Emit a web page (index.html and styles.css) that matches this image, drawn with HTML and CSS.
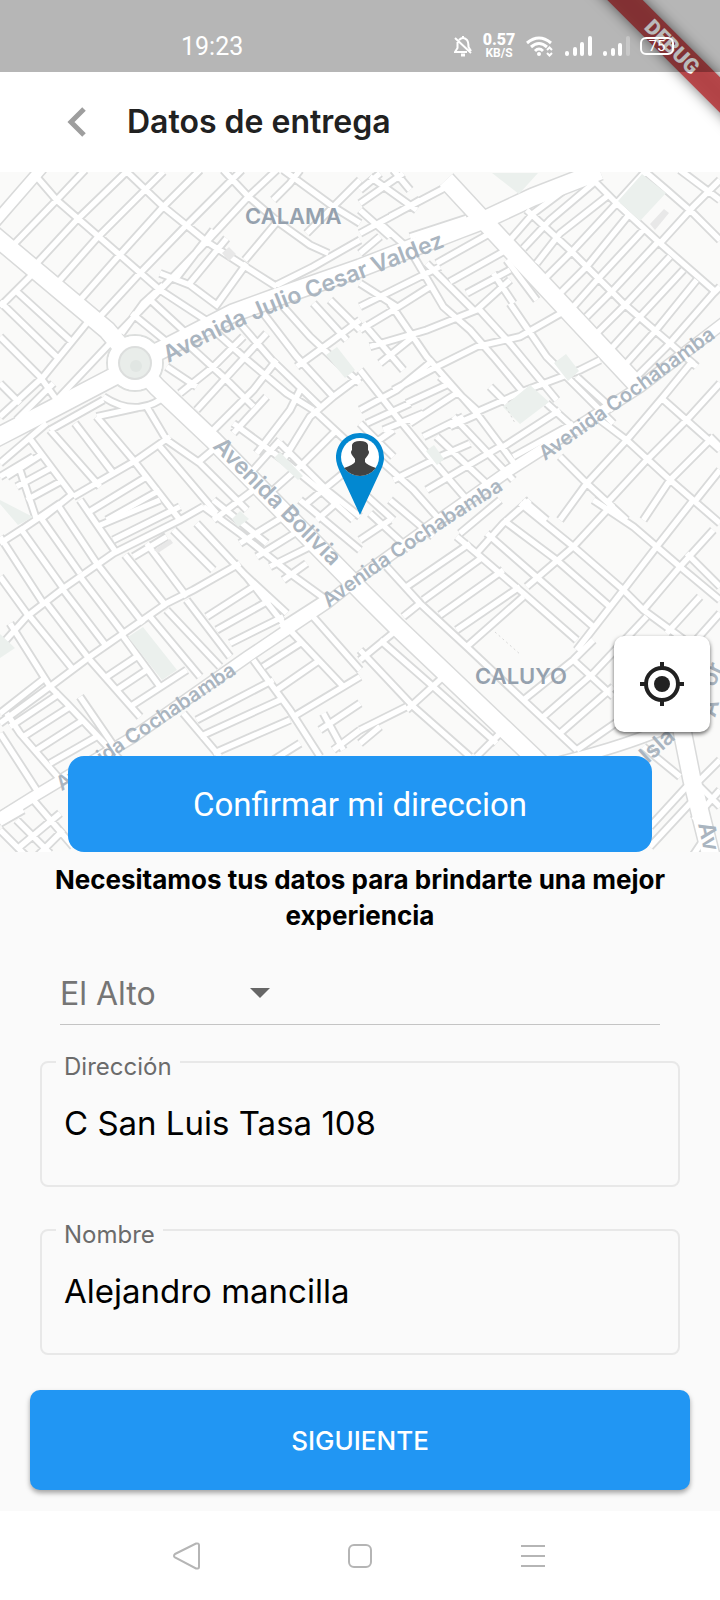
FILE: index.html
```html
<!DOCTYPE html>
<html lang="es">
<head>
<meta charset="utf-8">
<meta name="viewport" content="width=device-width, initial-scale=1">
<title>Datos de entrega</title>
<link rel="stylesheet" href="styles.css">
</head>
<body>
<div class="app">
  <svg class="debug-banner" viewBox="0 0 150 150" aria-label="Debug">
    <defs><filter id="soft" x="-30%" y="-30%" width="160%" height="160%"><feGaussianBlur stdDeviation="7"/></filter></defs>
    <path d="M31 -24L174 119" stroke="#000" stroke-opacity=".55" stroke-width="25" filter="url(#soft)"/>
    <path d="M31 -24L174 119" stroke="#b64043" stroke-opacity=".94" stroke-width="25"/>
    <text class="debug-text" transform="translate(102 47) rotate(45)" text-anchor="middle" y="7">DEBUG</text>
  </svg>
  <header class="status">
    <time class="clock">19:23</time>
    <div class="status-icons">
      <svg width="18" height="22" viewBox="0 0 18 22" fill="none" stroke="#fff" stroke-width="2"><path d="M5 5Q9 1 13 5Q14.500 7 14.500 12L17 16M3.500 7V13L1 17H13M9 1V3M1 3L17 18"/><path d="M7 20H11" stroke-width="3"/></svg>
      <div class="speed"><b>0.57</b><span>KB/S</span></div>
      <svg width="28" height="22" viewBox="0 0 28 22" fill="none" stroke="#fff" stroke-width="3"><path d="M1 8Q13-2 25 8M5 12Q13 5 21 12M9 16Q13 12 17 16"/><circle cx="13" cy="19" r="2" fill="#fff" stroke="none"/><path d="M21 15L23.500 12.500L26 15M21 18L23.500 20.500L26 18" stroke-width="2"/></svg>
      <svg width="28" height="20" viewBox="0 0 28 20" stroke="#fff" stroke-width="4" stroke-linecap="round"><path d="M3 18V17M11 18V13M18 18V8M26 18V2"/></svg>
      <svg width="28" height="20" viewBox="0 0 28 20" stroke="#fff" stroke-width="4" stroke-linecap="round"><path d="M3 18V17M11 18V14M18 18V9"/><path d="M26 18V2" stroke-opacity=".25"/></svg>
      <div class="battery">75</div>
    </div>
  </header>

  <div class="appbar">
    <button class="back" aria-label="Volver"><svg width="20" height="30" viewBox="0 0 20 30" fill="none" stroke="#9e9e9e" stroke-width="5"><path d="M17 2L4 15L17 28"/></svg></button>
    <h1>Datos de entrega</h1>
  </div>

  <section class="map">
    <svg class="map-canvas" viewBox="0 172 720 680" role="img" aria-label="Mapa">
      <defs>
        <g id="minor" fill="none">
          <path transform="translate(0 170) scale(.33333)" d="M40 225L170 90L255 0M110 280L230 150L380 5M175 335L290 205L490 5M240 390L350 265L490 110L600 0M295 445L410 320L560 165L725 0M350 495L480 360L620 215L745 80L830 0M105 15L170 90L480 360L640 465M380 5L490 110L620 215L720 280L830 350M670 0L745 80L840 160L930 225L985 250M850 0L1000 110L1080 160M820 90L870 40L900 0M920 190L1000 110L1080 30M735 270L840 145M525 330L640 180M565 345L680 205M480 310L570 345L650 405L740 280M395 430L530 540M440 380L570 500M365 490L430 400L490 345M830 345L940 290L1080 210
          M560 520L680 630L760 710M640 480L730 560L860 670L940 720M720 460L815 570L960 710M790 430L890 560L1000 680M850 410L930 500L1080 640M940 400L1040 510M990 390L1080 480M540 670L640 590L730 500M590 720L690 610L800 490M640 780L760 660L830 570M700 790L800 680M770 850L870 720L900 660M850 870L930 740L1000 680L1080 620M890 590L1000 510L1080 450M700 760L850 870L960 960L1060 1050M840 820L980 960L1080 1040M940 720L1080 850M760 900L840 810M820 960L910 880L1010 780M920 1000L1030 910M500 590L590 650
          M0 410L100 310M45 360L220 520M0 395L180 570M0 500L120 620L170 690M0 740L130 620L260 460M0 640L60 700M50 750L160 640M170 690L330 520M0 880L140 760M85 800L220 980M150 780L300 950M225 760L340 910M290 740L400 870L540 1050M220 980L410 870L510 800M440 710L500 810L600 880L740 1020M590 880L650 830M290 740L450 705M20 920L130 850M50 950L160 890M80 990L190 930M60 900L110 1050M260 1030L440 920M320 1050L480 960M120 1050L220 970M480 830L650 1030M0 920L100 860M640 1050L760 960M150 780L310 690M310 680Q400 740 480 690"/>
          <path transform="translate(360 170) scale(.33333)" d="M0 100L130 10M30 20L170 120M100 0L150 60M0 120L90 200M90 140L280 40M0 60L60 10M0 190L110 130L180 90M150 200L320 145M0 250L60 200M60 160L150 240
          M500 120L630 240L790 400L930 520L1010 590M690 20L770 100L900 220L1060 360M450 210L520 130L640 40M490 235L570 150L700 40M530 280L600 190L740 80M560 320L640 240L770 100M600 370L680 290L810 130M640 410L720 320L850 180M680 440L760 360L890 220M710 490L800 400L930 260M750 540L840 440L970 300M790 590L880 490L1010 330M830 620L920 530L1060 370M770 100L860 0M900 220L1000 110L1080 30M850 0L920 60L1000 130L1080 210M960 0L1080 90M1060 370L1080 350
          M230 280L390 190M270 335L430 245M320 370L450 300M90 400L200 560L350 730L470 890M150 240L250 410L330 480L400 560L500 680M200 280L340 420M350 410L450 520L590 690M450 400L560 560L760 760M400 310L460 400M440 270L530 390M0 410L160 330L240 290M0 480L100 420L210 350M30 530L200 480L350 420L450 330M10 460L130 600M60 580L160 500M100 660L230 590L350 530L480 500L620 420M0 720L110 660L220 570M140 700L270 640M20 760L150 700M150 760L290 670M340 730L500 660L660 600L720 570M270 770L360 730M190 800L310 740M430 830L600 720M460 860L640 760M100 930L240 860L330 820M200 960L420 830M0 600L110 740L200 850L330 1000M0 760L100 860M60 870L160 960L240 1050M280 740L460 930M230 800L400 960M560 700L660 790M650 620L760 720M390 650L440 700M240 620L350 720M70 780L190 730M0 850L100 780M0 960L100 1050M0 340L110 410
          M600 860L680 940L800 1050M720 750L800 810L930 930L1080 1060M900 680L990 760L1080 840M600 1050L680 940L800 810L910 680L1000 570M740 1000L860 870L980 750L1080 640M850 1050L930 930L1060 800M490 990L560 1050M1000 1000L1080 900M1050 800L1080 830"/>
          <path transform="translate(0 500) scale(.33333)" d="M0 130L70 85L180 10M0 440L80 350L190 265L340 160L540 60L610 20M0 670L150 560L270 470L500 310L580 270L720 190M0 230L80 340M0 110L130 310M65 90L190 265M120 50L240 220M170 10L290 190M240 0L350 160M30 370L150 560L200 610L370 790M90 350L220 510M140 310L270 480M190 270L320 440M240 230L370 400M290 190L430 370M375 165L500 320M440 130L560 290M520 90L640 210M590 70L740 230L850 370M270 480L420 650M370 410L480 560M450 350L600 530M560 300L690 470M320 530L410 470M350 570L440 510M390 620L560 510M0 640L140 530M30 680L180 580M70 710L210 620M110 750L250 660M150 790L290 710M20 640L60 700L190 850M0 700L110 870M240 590L350 750M290 80L480 0M340 120L540 20M400 170L500 110
          M500 330L660 500M620 350L760 260M650 390L810 300M690 430L850 350M840 380L980 290M610 20L720 100L870 220L980 300M640 0L800 130M720 130L850 50M770 170L900 90M810 200L930 140M850 240L920 190M730 220L860 340M900 0L1080 150M950 60L1020 0M760 480L870 630L960 770M860 380L1030 560M930 340L1080 510M790 500L900 430M830 570L960 480M880 650L1080 530M590 660L820 540M600 710L840 600M640 760L870 660M550 640L660 770M960 690L1080 610M970 640L1030 750M1000 750L1080 690M820 780L900 730M50 960L150 1060M100 900L220 1040M0 990L90 1080M0 970L70 930M60 1040L180 940M100 1080L190 990"/>
          <path transform="translate(360 500) scale(.33333)" d="M80 200L180 310L320 440L490 600L650 750M290 110L350 160L490 280L650 420M380 100L540 240L700 380M430 60L590 180L750 320M480 10L640 140L790 270L850 330L1000 440M700 0L820 80L960 200L1080 300M140 260L330 130M190 300L370 170M240 345L430 210M290 390L480 260M320 440L490 290M130 350L180 310M300 100L420 0M350 160L430 70L510 0M500 260L640 140L760 10M650 450L790 270L890 140L1000 0M850 330L960 200L1060 90M920 400L1020 290M490 600L640 480L700 420M550 650L700 520L860 350M600 700L760 560M650 750L780 660M640 480L760 590M980 160L1080 260M1000 430L1080 340M0 450L160 620L330 770M60 420L220 560L410 730M0 480L110 390M140 630L250 530M0 690L140 620M0 730L60 680M350 770L430 690M0 120L90 60M30 40L150 150M90 0L220 110M870 1040L1000 900M870 980L980 860M1000 860L1080 780M1020 860L1080 920M1000 960L1080 870M970 1110L1030 1020M850 740L960 830"/>
        </g>
        <g id="major" fill="none">
          <path d="M-10 232L107 330L135 363L157 387L213 440L367 597L397 627L540 763L630 860"/>
          <path d="M-8 440L50 410L113 377L135 363L167 347L233 313L277 297L360 268L460 229L484 220L533 197L600 171"/>
          <path d="M446 180L484 221L638 386"/>
          <path d="M680 720L692 780L712 860"/>
        </g>
        <g id="avenue" fill="none">
          <path d="M730 318L640 387L510 470L443 517L360 577L327 603L247 657L133 737L33 797L-10 824"/>
          <path d="M-5 222L42 168M560 762Q630 745 680 722"/>
        </g>
        <path id="valdez" d="M168 363Q240 324 300 302T480 233"/>
        <path id="bolivia" d="M212 447L360 595"/>
        <path id="coch1" d="M329 608Q400 553 540 467"/>
        <path id="coch2" d="M545 461Q640 394 750 312"/>
        <path id="coch3" d="M62 791Q150 733 270 651"/>
      </defs>
      <path class="land" d="M0 172H720V852H0Z"/>
      <use href="#minor" class="case minor-case"/>
      <use href="#avenue" class="case avenue-case"/>
      <use href="#major" class="case major-case"/>
      <circle cx="135" cy="363" r="28" fill="#fff" stroke="#dcdedd" stroke-width="2"/>
      <use href="#minor" class="road minor-road"/>
      <use href="#avenue" class="road avenue-road"/>
      <use href="#major" class="road major-road"/>
      <circle cx="135" cy="363" r="27" fill="#fff"/>
      <circle cx="135" cy="363" r="16" fill="#e9edea" stroke="#dcdedd" stroke-width="2"/>
      <circle cx="136" cy="366" r="6" fill="#e1e6e3"/>
      <path class="park" d="M492 173H538L519 194ZM618 201L642 174L666 193L640 221ZM503 407L530 385L549 402L520 424ZM554 363L566 354L579 371L568 381ZM326 355L337 347L355 370L345 378ZM128 637L143 627L177 670L162 680ZM0 500L33 517L18 525L0 504ZM0 634L15 648L0 658ZM274 458L280 452L303 476L298 480ZM426 451L434 445L444 459L437 465ZM232 519L240 511L249 519L238 527Z"/>
      <path class="building" d="M222 253L229 247L236 254L229 261ZM154 550L170 539L173 543L158 553ZM650 224L664 209L669 213L655 230Z"/>
      <path d="M495 632L521 655M506 407L515 423" stroke="#d8d8d8" stroke-width="1" stroke-dasharray="2 3"/>
      <g class="place"><text x="245" y="224">CALAMA</text><text x="475" y="684">CALUYO</text></g>
      <g class="street">
        <text><textPath href="#valdez">Avenida Julio Cesar Valdez</textPath></text>
        <text><textPath href="#bolivia">Avenida Bolivia</textPath></text>
        <text class="street-small"><textPath href="#coch1">Avenida Cochabamba</textPath></text>
        <text class="street-small"><textPath href="#coch2">Avenida Cochabamba</textPath></text>
        <text class="street-small"><textPath href="#coch3">Avenida Cochabamba</textPath></text>
        <text transform="translate(648 764) rotate(-42)">Isla</text>
        <text transform="translate(714 688) rotate(-65)">or</text>
        <text transform="translate(715 718) rotate(-75)">A</text>
        <text transform="translate(698 824) rotate(78)">Av</text>
      </g>
      <g>
        <path d="M360 433C374 433 384 444 384 458Q384 464 379 474L360 515L341 474Q336 464 336 458C336 444 346 433 360 433Z" fill="#0288d1"/>
        <circle cx="360" cy="457" r="19" fill="#fff"/>
        <path d="M344 468Q353 465 355 462V459L352 455Q350 452 352 450V445Q353 441 360 441T368 445V450Q370 452 368 455L365 459V462Q367 465 376 468Q369 476 360 476T344 468Z" fill="#424242"/>
      </g>
    </svg>
    <button class="locate" aria-label="Mi ubicación"><svg width="44" height="44" viewBox="0 0 44 44" fill="none" stroke="#212121"><circle cx="22" cy="22" r="16" stroke-width="4"/><circle cx="22" cy="22" r="8" fill="#212121" stroke="none"/><path d="M22 0V6M22 38V44M0 22H6M38 22H44" stroke-width="4"/></svg></button>
    <button class="confirm">Confirmar mi direccion</button>
  </section>

  <form class="form">
    <h2>Necesitamos tus datos para brindarte una mejor experiencia</h2>
    <div class="city">
      <select aria-label="Ciudad"><option>El Alto</option></select>
      <svg width="20" height="10" viewBox="0 0 20 10" fill="#666"><path d="M0 0H20L10 10Z"/></svg>
    </div>
    <fieldset class="field">
      <legend><label for="address">Dirección</label></legend>
      <input id="address" type="text" value="C San Luis Tasa 108">
    </fieldset>
    <fieldset class="field">
      <legend><label for="name">Nombre</label></legend>
      <input id="name" type="text" value="Alejandro mancilla">
    </fieldset>
    <button class="next" type="button">SIGUIENTE</button>
  </form>

  <nav class="sysnav">
    <button aria-label="Atrás"><svg width="28" height="28" viewBox="0 0 28 28"><path d="M2 12L23 1.500Q26 1 26 3V25Q26 27 23 26.500L2 15.500Q0 14 2 12Z"/></svg></button>
    <button aria-label="Inicio"><svg width="28" height="28" viewBox="0 0 28 28"><rect x="3" y="3" width="22" height="22" rx="5"/></svg></button>
    <button aria-label="Recientes"><svg width="28" height="28" viewBox="0 0 28 28"><path d="M2 4H26M2 14H26M2 24H26"/></svg></button>
  </nav>
</div>
</body>
</html>
```
FILE: styles.css
```css
* { box-sizing: border-box; }

body {
  margin: 0;
  background: #fafafa;
  font-family: Inter, "Open Sans", sans-serif;
  color: #000;
}

button { border: 0; padding: 0; font: inherit; cursor: pointer; }
svg { display: block; }

.app {
  position: relative;
  display: flex;
  flex-direction: column;
  min-height: 100vh;
  overflow: hidden;
}

.debug-banner {
  position: absolute;
  z-index: 1;
  top: 0;
  right: 0;
  width: 150px;
  height: 150px;
  pointer-events: none;
}

.debug-text { font: 900 21px Roboto, sans-serif; fill: #fff; }

.status {
  position: relative;
  z-index: 2;
  display: flex;
  justify-content: space-between;
  align-items: center;
  height: 72px;
  padding: 20px 46px 0 181px;
  background: rgba(0, 0, 0, .27);
  color: #fff;
}

.clock { font: 400 25px Roboto, sans-serif; }
.status-icons { display: flex; align-items: center; gap: 10px; }

.speed {
  display: flex;
  flex-direction: column;
  align-items: center;
  width: 34px;
  font: 700 16px/14px Roboto, sans-serif;
}

.speed span { font-size: 12px; line-height: 12px; }

.battery {
  width: 34px;
  height: 18px;
  border: 2px solid #fff;
  border-radius: 6px;
  font: 400 15px/14px Roboto, sans-serif;
  text-align: center;
}

.appbar {
  display: flex;
  align-items: center;
  gap: 40px;
  height: 100px;
  padding: 0 67px;
  background: #fff;
}

.back { background: none; }

h1 {
  margin: 0;
  font-size: 32px;
  font-weight: 600;
  line-height: 40px;
  color: #212121;
}

.map { position: relative; }
.map-canvas { width: 100%; height: auto; }
.land { fill: #fafaf9; }
.park { fill: #ebf0ed; }
.building { fill: #e8e8e8; }
.case { stroke: #d9dada; }
.road { stroke: #fff; }
.minor-case { stroke-width: 27px; }
.minor-road { stroke-width: 16px; }
.avenue-case { stroke-width: 13px; }
.avenue-road { stroke-width: 10px; }
.major-case { stroke-width: 20px; }
.major-road { stroke-width: 17px; }

.place { font-size: 22px; font-weight: 600; fill: #95a1ae; }
.street { font-size: 23px; font-weight: 600; fill: #aab5c0; }
.street-small { font-size: 20px; }

.locate {
  position: absolute;
  right: 10px;
  bottom: 120px;
  display: grid;
  place-items: center;
  width: 96px;
  height: 96px;
  border-radius: 10px;
  background: #fff;
  box-shadow: 0 2px 4px rgba(0, 0, 0, .6);
}

.confirm {
  position: absolute;
  right: 68px;
  bottom: 0;
  left: 68px;
  height: 96px;
  border-radius: 16px;
  background: #2196f3;
  color: #fff;
  font: 400 33px Roboto, sans-serif;
}

.form {
  display: flex;
  flex-direction: column;
  padding: 10px 30px 21px;
}

h2 {
  margin: 0 20px;
  font-size: 26px;
  font-weight: 700;
  line-height: 36px;
  text-align: center;
}

.city {
  display: flex;
  align-items: center;
  margin: 28px 30px 24px;
  height: 63px;
  border-bottom: 1px solid #c4c4c4;
}

select {
  appearance: none;
  width: 190px;
  border: 0;
  padding: 0;
  background: none;
  color: #757575;
  font: 400 32px Inter, sans-serif;
}

.field {
  min-width: 0;
  height: 138px;
  margin: 0 10px 30px;
  border: 2px solid #e8e8e8;
  border-radius: 8px;
  padding: 0 22px;
}

.field legend {
  margin-left: -8px;
  padding: 10px 8px 0;
  color: #6b6b6b;
  font-size: 24px;
  line-height: 16px;
}

.field input {
  width: 100%;
  margin-top: 24px;
  border: 0;
  padding: 0;
  background: none;
  color: #000;
  font: 400 33px/48px Inter, sans-serif;
}

.next {
  height: 100px;
  margin-top: 5px;
  border-radius: 10px;
  background: #2196f3;
  color: #fff;
  font-size: 26px;
  font-weight: 500;
  box-shadow: 0 3px 5px rgba(0, 0, 0, .35);
}

.sysnav {
  flex: 1;
  display: flex;
  justify-content: center;
  align-items: center;
  gap: 145px;
  min-height: 89px;
  background: #fff;
}

.sysnav button { background: none; }
.sysnav svg { fill: none; stroke: #b5b5b5; stroke-width: 2px; }
```
